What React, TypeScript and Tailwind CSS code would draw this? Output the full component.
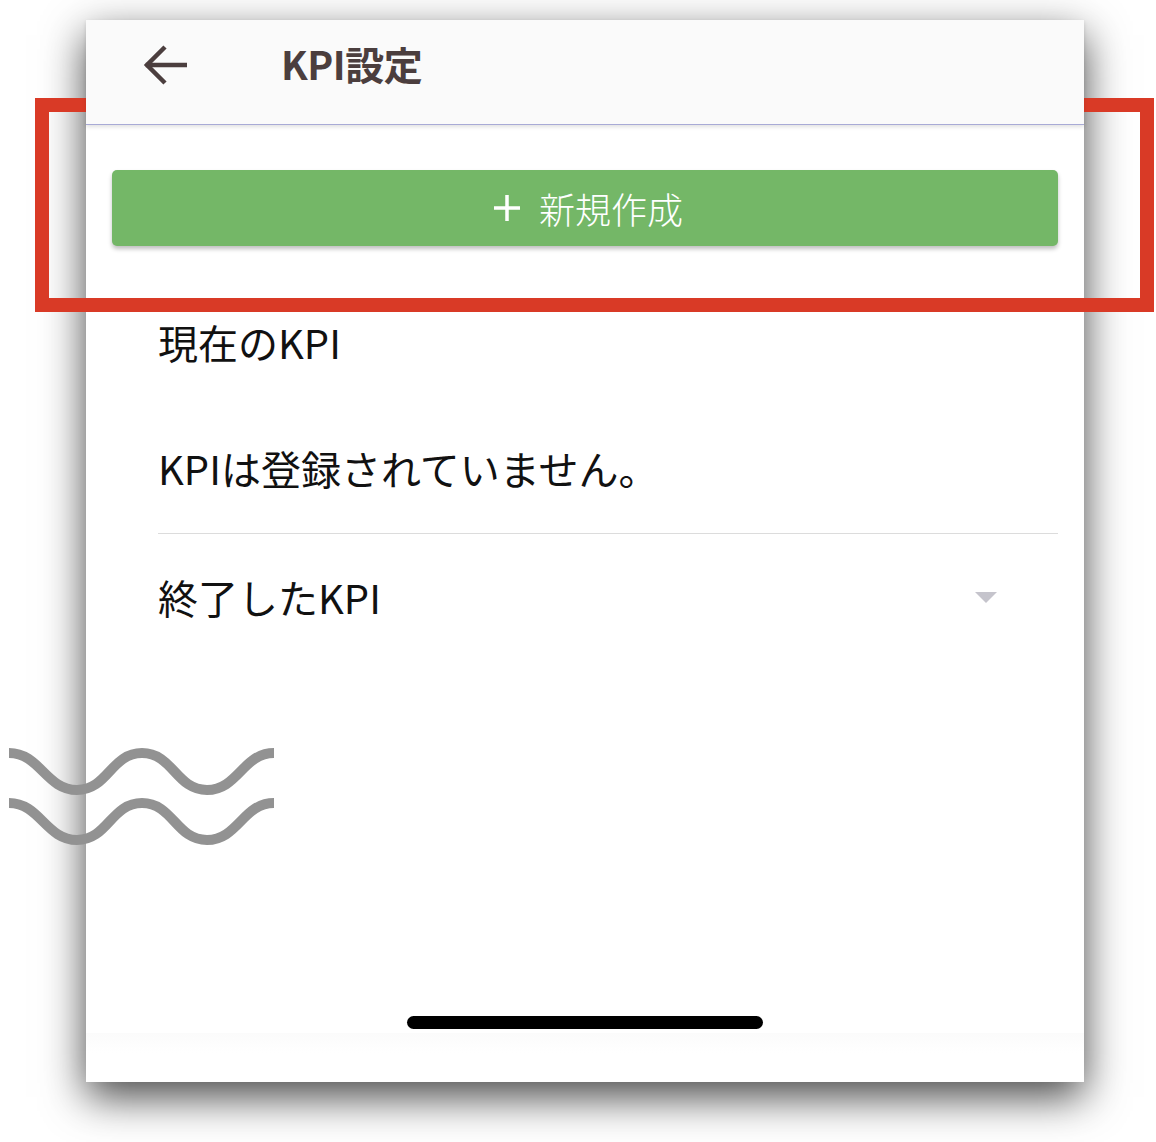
import React from 'react';

const jp = { fontFamily: '"Noto Sans CJK JP", "Noto Sans", sans-serif' };

function BackArrow() {
  return (
    <svg width="44" height="44" viewBox="0 0 44 44" fill="none" stroke="#4b3e3e" strokeWidth="4.5" strokeLinecap="square">
      <path d="M42 22H5" />
      <path d="M22 4 4 22l18 18" strokeLinecap="butt" />
    </svg>
  );
}

function Waves() {
  return (
    <svg width="290" height="120" viewBox="0 0 290 120" fill="none" stroke="#929292" strokeWidth="10">
      <path d="M9 13C40 13 46 50 77 50S111 13 142 13 176 50 207 50 243 13 274 13" />
      <path d="M9 63C40 63 46 100 77 100S111 63 142 63 176 100 207 100 243 63 274 63" />
    </svg>
  );
}

export default function App() {
  return (
    <div className="relative w-[1156px] h-[1142px] bg-white overflow-hidden" style={jp}>
      <div className="pl-[86px] pt-[20px]">
        {/* phone card */}
        <div className="w-[998px] h-[1062px] bg-white flex flex-col shadow-[0_15px_40px_rgba(0,0,0,0.72)]">
          <div className="h-[105px] bg-[#fafafa] border-b border-[#a8aad6] shadow-[0_2px_4px_rgba(0,0,0,0.12)] relative z-10">
            <div className="h-[90px] flex items-center">
              <div className="ml-[57px] w-[44px] h-[44px]">
                <BackArrow />
              </div>
              <h1 className="ml-[94px] -mt-[4px] text-[39px] leading-none font-bold text-[#4b3e3e] tracking-[-0.5px]">KPI設定</h1>
            </div>
          </div>

          <div className="px-[26px] pt-[45px]">
            <button className="w-full h-[76px] rounded-[5px] bg-[#74b767] shadow-[0_3px_4px_rgba(0,0,0,0.25)] flex items-center justify-center gap-[18px] text-white">
              <svg className="ml-[6px]" width="28" height="28" viewBox="0 0 28 28" stroke="white" strokeWidth="3.5">
                <path d="M14 1v26M1 14h26" />
              </svg>
              <span className="text-[36px] leading-none font-light">新規作成</span>
            </button>
          </div>

          <div className="pl-[72px] pr-[26px] text-[40px] leading-[44px] text-[#111]">
            <p className="mt-[74px]">現在のKPI</p>
            <p className="mt-[82px]">KPIは登録されていません。</p>
            <div className="mt-[43px] h-px bg-[#dcdcdc]" />
            <div className="mt-[41px] flex items-center justify-between">
              <span>終了したKPI</span>
              <svg className="mr-[61px]" width="22" height="11" viewBox="0 0 22 11">
                <path d="M0 0h22L11 11z" fill="#c5c4cc" />
              </svg>
            </div>
          </div>

          <div className="mt-auto flex flex-col items-center">
            <div className="w-[356px] h-[13px] rounded-full bg-black" />
            <div className="mt-[4px] w-full h-[20px] bg-gradient-to-b from-[#fbfbfb] to-white" />
            <div className="h-[29px]" />
          </div>
        </div>
      </div>

      {/* annotation overlay */}
      <div className="absolute left-[35px] top-[98px] w-[1119px] h-[214px] border-[14px] border-[#d93a26]" />
      <div className="absolute left-0 top-[740px]">
        <Waves />
      </div>
    </div>
  );
}
